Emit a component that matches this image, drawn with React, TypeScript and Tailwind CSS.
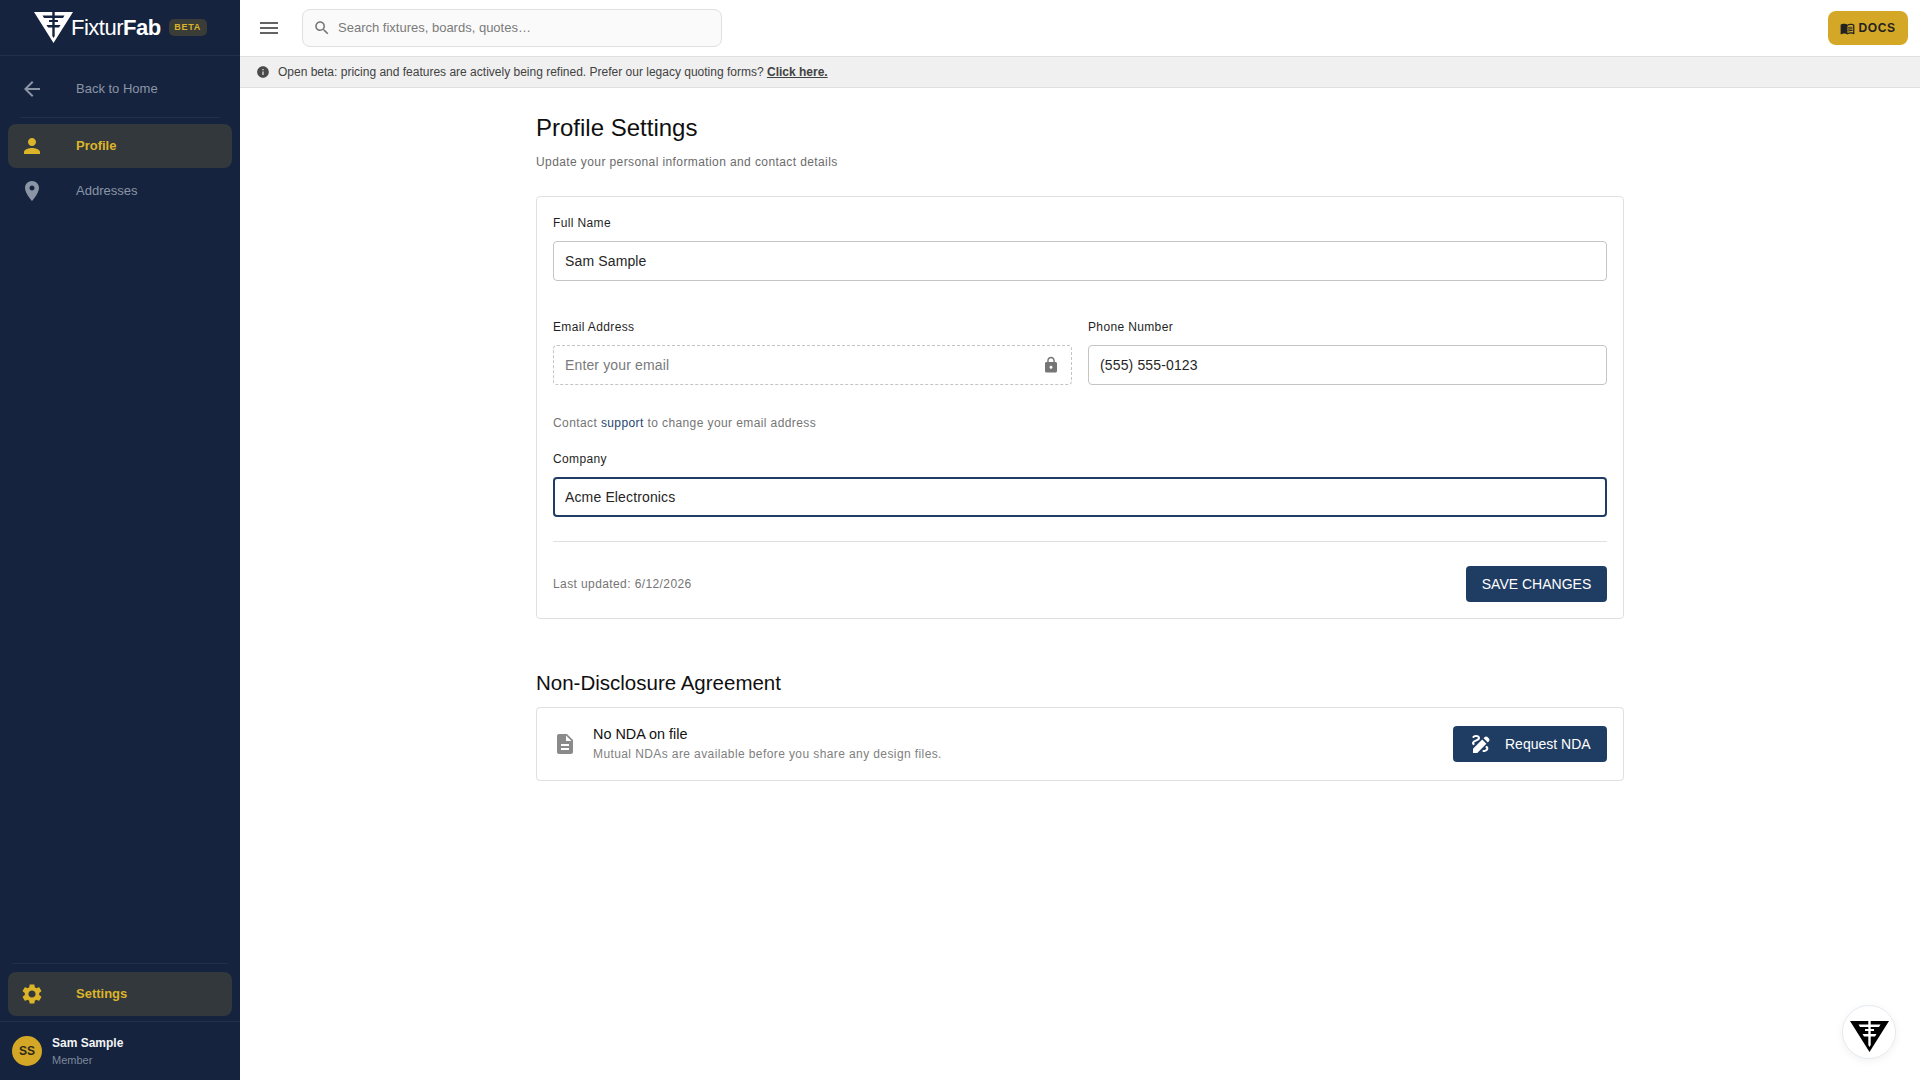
const FONT = "font-['Liberation_Sans',Arial,sans-serif]";

const icons = {
  back: "M20 11H7.83l5.59-5.59L12 4l-8 8 8 8 1.41-1.41L7.83 13H20v-2z",
  person: "M12 12c2.21 0 4-1.79 4-4s-1.79-4-4-4-4 1.79-4 4 1.79 4 4 4zm0 2c-2.67 0-8 1.34-8 4v2h16v-2c0-2.66-5.33-4-8-4z",
  place: "M12 2C8.13 2 5 5.13 5 9c0 5.25 7 13 7 13s7-7.75 7-13c0-3.87-3.13-7-7-7zm0 9.5c-1.38 0-2.5-1.12-2.5-2.5s1.12-2.5 2.5-2.5 2.5 1.12 2.5 2.5-1.12 2.5-2.5 2.5z",
  settings: "M19.14 12.94c.04-.3.06-.61.06-.94 0-.32-.02-.64-.07-.94l2.03-1.58c.18-.14.23-.41.12-.61l-1.92-3.32c-.12-.22-.37-.29-.59-.22l-2.39.96c-.5-.38-1.03-.7-1.62-.94l-.36-2.54c-.04-.24-.24-.41-.48-.41h-3.84c-.24 0-.43.17-.47.41l-.36 2.54c-.59.24-1.13.57-1.62.94l-2.39-.96c-.22-.08-.47 0-.59.22L2.74 8.87c-.12.21-.08.47.12.61l2.03 1.58c-.05.3-.09.63-.09.94s.02.64.07.94l-2.03 1.58c-.18.14-.23.41-.12.61l1.92 3.32c.12.22.37.29.59.22l2.39-.96c.5.38 1.03.7 1.62.94l.36 2.54c.05.24.24.41.48.41h3.84c.24 0 .44-.17.47-.41l.36-2.54c.59-.24 1.13-.56 1.62-.94l2.39.96c.22.08.47 0 .59-.22l1.92-3.32c.12-.22.07-.47-.12-.61l-2.01-1.58zM12 15.6c-1.98 0-3.6-1.62-3.6-3.6s1.62-3.6 3.6-3.6 3.6 1.62 3.6 3.6-1.62 3.6-3.6 3.6z",
  menu: "M3 18h18v-2H3v2zm0-5h18v-2H3v2zm0-7v2h18V6H3z",
  search: "M15.5 14h-.79l-.28-.27C15.41 12.59 16 11.11 16 9.5 16 5.91 13.09 3 9.5 3S3 5.91 3 9.5 5.91 16 9.5 16c1.61 0 3.09-.59 4.23-1.57l.27.28v.79l5 4.99L20.49 19l-4.99-5zm-6 0C7.01 14 5 11.99 5 9.5S7.01 5 9.5 5 14 7.01 14 9.5 11.99 14 9.5 14z",
  info: "M12 2C6.48 2 2 6.48 2 12s4.48 10 10 10 10-4.48 10-10S17.52 2 12 2zm1 15h-2v-6h2v6zm0-8h-2V7h2v2z",
  lock: "M18 8h-1V6c0-2.76-2.24-5-5-5S7 3.24 7 6v2H6c-1.1 0-2 .9-2 2v10c0 1.1.9 2 2 2h12c1.1 0 2-.9 2-2V10c0-1.1-.9-2-2-2zm-6 9c-1.1 0-2-.9-2-2s.9-2 2-2 2 .9 2 2-.9 2-2 2zm3.1-9H8.9V6c0-1.71 1.39-3.1 3.1-3.1 1.71 0 3.1 1.39 3.1 3.1v2z",
  doc: "M14 2H6c-1.1 0-1.99.9-1.99 2L4 20c0 1.1.89 2 1.99 2H18c1.1 0 2-.9 2-2V8l-6-6zm2 16H8v-2h8v2zm0-4H8v-2h8v2zm-3-5V3.5L18.5 9H13z",
  draw: "M18.85 10.39l1.06-1.06c.78-.78.78-2.05 0-2.83L18.5 5.09c-.78-.78-2.05-.78-2.83 0l-1.06 1.06 4.24 4.24zm-5.66-2.83L4 16.76V21h4.24l9.19-9.19-4.24-4.25zm6.16 8.94c0 2.19-2.54 3.5-4.85 3.5-.55 0-1-.45-1-1s.45-1 1-1c1.54 0 2.85-.71 2.85-1.5 0-.48-.49-.89-1.26-1.23l1.48-1.48c1.07.63 1.78 1.46 1.78 2.71zM4.58 13.35C3.61 12.79 3 12.06 3 11c0-1.8 1.89-2.63 3.56-3.36C7.59 7.18 9 6.56 9 6c0-.41-.78-1-2-1-1.26 0-1.8.61-1.83.64-.35.41-.98.46-1.4.12-.41-.34-.49-.95-.15-1.38C3.73 4.24 4.76 3 7 3s4 1.32 4 3c0 1.87-1.93 2.72-3.64 3.47C6.42 9.88 5 10.5 5 11c0 .31.43.6 1.07.86l-1.49 1.49z",
  book: "M21 5c-1.11-.35-2.33-.5-3.5-.5-1.95 0-4.05.4-5.5 1.5-1.45-1.1-3.55-1.5-5.5-1.5S2.45 4.9 1 6v14.65c0 .25.25.5.5.5.1 0 .15-.05.25-.05C3.1 20.45 5.05 20 6.5 20c1.95 0 4.05.4 5.5 1.5 1.35-.85 3.8-1.5 5.5-1.5 1.65 0 3.35.3 4.75 1.05.1.05.15.05.25.05.25 0 .5-.25.5-.5V6c-.6-.45-1.25-.75-2-1zm0 13.5c-1.1-.35-2.3-.5-3.5-.5-1.7 0-4.15.65-5.5 1.5V8c1.35-.85 3.8-1.5 5.5-1.5 1.2 0 2.4.15 3.5.5v11.5z M17.5 10.5c.88 0 1.73.09 2.5.26V9.24c-.79-.15-1.64-.24-2.5-.24-1.7 0-3.24.29-4.5.83v1.66c1.13-.64 2.7-.99 4.5-.99z M13 12.49v1.66c1.13-.64 2.7-.99 4.5-.99.88 0 1.73.09 2.5.26V11.9c-.79-.15-1.64-.24-2.5-.24-1.7 0-3.24.3-4.5.83z M17.5 14.33c-1.7 0-3.24.29-4.5.83v1.66c1.13-.64 2.7-.99 4.5-.99.88 0 1.73.09 2.5.26v-1.52c-.79-.16-1.64-.24-2.5-.24z",
};

function Icon({ d, className }: { d: string; className?: string }) {
  return (
    <svg viewBox="0 0 24 24" fill="currentColor" className={className}>
      <path d={d} />
    </svg>
  );
}

// triangle mark, the cut-out is a central stem with three pairs of arms
function Logo({ className }: { className?: string }) {
  return (
    <svg viewBox="0 0 39 31" fill="currentColor" className={className}>
      <path
        fillRule="evenodd"
        d="M0 0H39L19.5 31ZM18.3 0V3.5H8.5L10 6H18.3V8H15V10H18.3V13H12.5L14 15.5H18.3V24L19.5 26L20.7 24V15.5H25L26.5 13H20.7V10H24V8H20.7V6H29L30.5 3.5H20.7V0Z"
      />
    </svg>
  );
}

function NavItem({ icon, label, active }: { icon: string; label: string; active?: boolean }) {
  return (
    <div
      className={`mx-2 flex h-11 items-center rounded-lg pl-3 ${
        active ? "bg-[#33383c] font-bold text-[#dcb42a]" : "text-[#8c95a5]"
      }`}
    >
      <Icon d={icon} className="h-6 w-6 shrink-0" />
      <span className="ml-8 text-[13px]">{label}</span>
    </div>
  );
}

function Field({
  label,
  value,
  placeholder,
  variant = "plain",
}: {
  label: string;
  value?: string;
  placeholder?: string;
  variant?: "plain" | "locked" | "focused";
}) {
  const border = {
    plain: "border border-[#c4c4c4] px-[11px]",
    locked: "border border-dashed border-[#c4c4c4] px-[11px]",
    focused: "border-2 border-[#1f3d63] px-[10px]",
  }[variant];
  return (
    <div className="flex flex-col">
      <label className="mb-[10px] h-[15px] text-xs leading-[15px] tracking-[0.03em] text-[#1f1f1f]">{label}</label>
      <div className={`flex h-10 items-center rounded ${border}`}>
        <input
          readOnly
          defaultValue={value}
          placeholder={placeholder}
          className="w-full min-w-0 bg-transparent text-sm tracking-[0.14px] text-[#262626] outline-none placeholder:text-[#7a7a7a]"
        />
        {variant === "locked" && <Icon d={icons.lock} className="h-[18px] w-[18px] shrink-0 text-[#757575]" />}
      </div>
    </div>
  );
}

export default function App() {
  return (
    <div className={`flex h-[1080px] overflow-hidden bg-white ${FONT}`}>
      <aside className="flex w-60 shrink-0 flex-col bg-[#15233f]">
        <div className="flex h-14 items-center border-b border-[#22304c] pl-[34px]">
          <Logo className="h-[31px] w-[39px] shrink-0 text-white" />
          <span className="-ml-[2px] text-[22px] leading-none tracking-[-0.5px] text-white">
            Fixtur<span className="font-bold">Fab</span>
          </span>
          <span className="ml-2 flex h-[17px] w-[38px] items-center justify-center rounded-[5px] bg-[#3a3c37] text-[9px] font-bold tracking-[0.08em] text-[#dcb42a]">
            BETA
          </span>
        </div>

        <div className="flex flex-1 flex-col">
          <div className="flex h-[61px] items-center pt-1 pl-5 text-[#8c95a5]">
            <Icon d={icons.back} className="h-6 w-6 shrink-0" />
            <span className="ml-8 text-[13px]">Back to Home</span>
          </div>
          <div className="mx-5 h-px bg-[#22304c]" />
          <div className="mt-[6px] flex flex-col gap-[1px]">
            <NavItem icon={icons.person} label="Profile" active />
            <NavItem icon={icons.place} label="Addresses" />
          </div>
          <div className="mt-auto px-3">
            <div className="h-px bg-[#22304c]" />
          </div>
          <div className="mt-2 mb-[5px]">
            <NavItem icon={icons.settings} label="Settings" active />
          </div>
        </div>

        <div className="flex h-[59px] items-center gap-[10px] border-t border-[#22304c] pl-3">
          <div className="flex h-[30px] w-[30px] items-center justify-center rounded-full bg-[#d4a826] text-xs font-bold text-[#2c2a20]">
            SS
          </div>
          <div className="flex flex-col pt-px">
            <span className="text-xs font-bold leading-[17px] text-[#f2f3f5]">Sam Sample</span>
            <span className="text-[11px] leading-[17px] text-[#7d8798]">Member</span>
          </div>
        </div>
      </aside>

      <div className="flex min-w-0 flex-1 flex-col">
        <header className="flex h-14 items-center pl-[17px] pr-3">
          <Icon d={icons.menu} className="h-6 w-6 text-[#636363]" />
          <div className="ml-[21px] flex h-[38px] w-[420px] items-center rounded-lg border border-[#e0e0e0] bg-[#fafafa] pl-[10px]">
            <Icon d={icons.search} className="h-[18px] w-[18px] text-[#757575]" />
            <span className="ml-[7px] text-[13px] text-[#7a7a7a]">Search fixtures, boards, quotes…</span>
          </div>
          <button className="ml-auto flex h-[34px] w-20 items-center justify-center gap-[3px] rounded-lg bg-[#d4a826] text-xs font-bold tracking-[0.05em] text-[#222]">
            <Icon d={icons.book} className="h-[15px] w-[15px]" />
            DOCS
          </button>
        </header>

        <div className="flex h-[32px] items-center border-y border-[#e0e0e0] bg-[#f0f0f0] pl-4 text-xs text-[#424242]">
          <Icon d={icons.info} className="h-[14px] w-[14px] text-[#4a4a4a]" />
          <span className="ml-2">
            Open beta: pricing and features are actively being refined. Prefer our legacy quoting forms?{" "}
            <a className="font-bold underline">Click here.</a>
          </span>
        </div>

        <main className="relative flex-1">
          <div className="mx-auto w-[1088px]">
            <h1 className="mt-[24px] text-2xl leading-[32px] text-[#0f0f0f]">Profile Settings</h1>
            <p className="mt-[11px] text-xs leading-[15px] tracking-[0.4px] text-[#6b6b6b]">
              Update your personal information and contact details
            </p>

            <section className="mt-[26px] rounded border border-[#e0e0e0] px-4 pt-[19px] pb-4">
              <Field label="Full Name" value="Sam Sample" />
              <div className="mt-[39px] grid grid-cols-2 gap-4">
                <Field label="Email Address" placeholder="Enter your email" variant="locked" />
                <Field label="Phone Number" value="(555) 555-0123" />
              </div>
              <p className="mt-[31px] text-xs leading-[15px] tracking-[0.4px] text-[#757575]">
                Contact <a className="text-[#24466f]">support</a> to change your email address
              </p>
              <div className="mt-[21px]">
                <Field label="Company" value="Acme Electronics" variant="focused" />
              </div>
              <div className="mt-6 h-px bg-[#e0e0e0]" />
              <div className="mt-6 flex items-center justify-between">
                <span className="text-xs tracking-[0.4px] text-[#757575]">Last updated: 6/12/2026</span>
                <button className="flex h-9 w-[141px] items-center justify-center rounded bg-[#1f3d63] text-sm text-white">
                  SAVE CHANGES
                </button>
              </div>
            </section>

            <h2 className="mt-[50px] text-[20.5px] leading-[28px] text-[#0f0f0f]">Non-Disclosure Agreement</h2>
            <section className="mt-[10px] flex h-[74px] items-center rounded border border-[#e0e0e0] pr-4 pl-4">
              <Icon d={icons.doc} className="h-6 w-6 shrink-0 text-[#8a8a8a]" />
              <div className="ml-4 flex flex-col pb-[2px]">
                <span className="text-[14.4px] leading-[22px] text-[#111]">No NDA on file</span>
                <span className="text-xs leading-[18px] tracking-[0.4px] text-[#808080]">
                  Mutual NDAs are available before you share any design files.
                </span>
              </div>
              <button className="ml-auto flex h-9 w-[154px] items-center gap-3 rounded bg-[#1f3d63] pl-4 text-sm text-white">
                <Icon d={icons.draw} className="h-6 w-6" />
                Request NDA
              </button>
            </section>
          </div>

          <div className="absolute right-[24px] bottom-[21px] flex h-[54px] w-[54px] items-center justify-center rounded-full border border-[#e6ebf2] bg-white pt-2 shadow-[0_2px_8px_rgba(0,0,0,0.06)]">
            <Logo className="h-[31px] w-[39px] text-black" />
          </div>
        </main>
      </div>
    </div>
  );
}
